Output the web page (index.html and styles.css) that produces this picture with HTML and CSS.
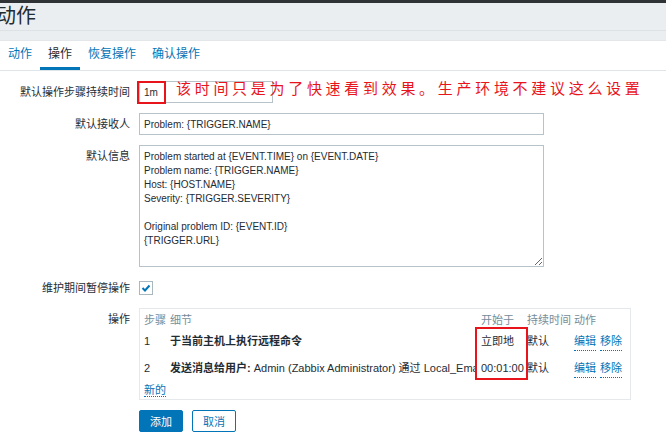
FILE: index.html
```html
<!DOCTYPE html>
<html lang="zh-CN">

<head>
  <meta charset="UTF-8">
  <meta name="viewport" content="width=device-width, initial-scale=1.0">
  <title>动作</title>
  <link rel="stylesheet" href="styles.css">
</head>

<body>
  <div class="topbar"></div>
  <div class="header">
    <h1>动作</h1>
  </div>
  <div class="header-gap"></div>

  <ul class="tabs">
    <li>动作</li>
    <li class="active">操作</li>
    <li>恢复操作</li>
    <li>确认操作</li>
  </ul>

  <form class="form">
    <label class="form-label">默认操作步骤持续时间</label>
    <div class="field field-note">
      <input class="input input-short" type="text" value="1m">
      <!-- annotation added on the screenshot -->
      <div class="mark mark-step"></div>
      <div class="note">该时间只是为了快速看到效果。生产环境不建议这么设置</div>
    </div>

    <label class="form-label">默认接收人</label>
    <div class="field">
      <input class="input input-long" type="text" value="Problem: {TRIGGER.NAME}">
    </div>

    <label class="form-label top">默认信息</label>
    <div class="field">
      <textarea class="textarea">Problem started at {EVENT.TIME} on {EVENT.DATE}
Problem name: {TRIGGER.NAME}
Host: {HOST.NAME}
Severity: {TRIGGER.SEVERITY}

Original problem ID: {EVENT.ID}
{TRIGGER.URL}</textarea>
    </div>

    <label class="form-label">维护期间暂停操作</label>
    <div class="field field-check">
      <span class="checkbox">
        <svg width="12" height="12" viewBox="0 0 12 12">
          <path d="M2.5 6 L5 8.5 L9.5 3.5" fill="none" stroke="#0275b8" stroke-width="2" />
        </svg>
      </span>
    </div>

    <label class="form-label top">操作</label>
    <div class="field">
      <div class="ops">
        <div class="ops-row ops-head">
          <div>步骤</div>
          <div>细节</div>
          <div class="col-start">开始于</div>
          <div>持续时间</div>
          <div>动作</div>
        </div>
        <div class="ops-row">
          <div>1</div>
          <div class="detail"><b>于当前主机上执行远程命令</b></div>
          <div class="col-start">立即地</div>
          <div>默认</div>
          <div class="actions"><a>编辑</a><a>移除</a></div>
        </div>
        <div class="ops-row">
          <div>2</div>
          <div class="detail"><b>发送消息给用户:</b> Admin (Zabbix Administrator) 通过 Local_Email</div>
          <div class="col-start">00:01:00</div>
          <div>默认</div>
          <div class="actions"><a>编辑</a><a>移除</a></div>
        </div>
        <div class="ops-new"><a>新的</a></div>
        <!-- annotation added on the screenshot -->
        <div class="mark mark-start"></div>
      </div>
    </div>

    <div></div>
    <div class="buttons">
      <button type="button" class="btn btn-main">添加</button>
      <button type="button" class="btn btn-alt">取消</button>
    </div>
  </form>
</body>

</html>
```

FILE: styles.css
```css
body {
  margin: 0;
  background-color: #fff;
  color: #1f2c33;
  font-family: "Liberation Sans", "Noto Sans CJK SC", sans-serif;
  font-size: 11px;
}

.topbar {
  height: 3px;
  background-color: #2f3336;
}

.header {
  height: 27px;
  background-color: #ebeef0;
  border-bottom: 1px solid #dde2e5;
}

.header h1 {
  margin: 0 0 0 -4px;
  font-size: 20px;
  font-weight: normal;
  line-height: 26px;
}

.header-gap {
  height: 9px;
  background-color: #ebeef0;
  border-bottom: 1px solid #e3e7ea;
}

.tabs {
  margin: 0;
  padding: 0;
  list-style: none;
  display: flex;
  border-bottom: 1px solid #dfe4e7;
}

.tabs li {
  padding: 0 8px;
  line-height: 26px;
  font-size: 12px;
  color: #0275b8;
  border-bottom: 3px solid transparent;
  cursor: pointer;
}

.tabs .active {
  color: #1f2c33;
  border-bottom-color: #0275b8;
}

.form {
  display: grid;
  grid-template-columns: 130px 1fr;
  grid-template-rows: 22px 22px 122px 21px 92px 22px;
  column-gap: 9px;
  row-gap: 10px;
  padding-top: 10px;
}

.form-label {
  text-align: right;
  line-height: 22px;
  white-space: nowrap;
}

.form-label.top {
  align-self: start;
}

.field {
  position: relative;
}

.input,
.textarea {
  box-sizing: border-box;
  margin: 0;
  border: 1px solid #b7c3c9;
  padding: 0 4px;
  color: #1f2c33;
  font-family: "Liberation Sans", "Noto Sans CJK SC", sans-serif;
  font-size: 10px;
  outline: none;
}

.input {
  height: 22px;
}

.input-short {
  width: 134px;
}

.input-long {
  width: 405px;
}

.textarea {
  display: block;
  width: 405px;
  height: 122px;
  padding: 4px;
  line-height: 14px;
}

.field-check {
  display: flex;
  align-items: center;
}

.checkbox {
  box-sizing: border-box;
  display: flex;
  align-items: center;
  justify-content: center;
  width: 14px;
  height: 14px;
  border: 1px solid #a9b8bf;
}

.ops {
  position: relative;
  box-sizing: border-box;
  width: 492px;
  height: 92px;
  padding: 3px 4px 4px;
  border: 1px solid #e6e9eb;
}

.ops-row {
  display: grid;
  grid-template-columns: 26px 307px 50px 47px 1fr;
  padding: 4px 0 5px;
  line-height: 17px;
  white-space: nowrap;
}

.ops-row .col-start {
  padding-left: 4px;
}

.ops-head {
  padding: 0;
  color: #768d99;
}

.detail {
  overflow: hidden;
}

.actions {
  display: flex;
  gap: 4px;
}

.ops a {
  color: #0275b8;
  border-bottom: 1px dotted #0275b8;
  cursor: pointer;
}

.ops-new {
  line-height: 14px;
}

/* red boxes and text drawn over the screenshot */
.mark {
  position: absolute;
  box-sizing: border-box;
  border: 2px solid #e8141c;
}

.mark-step {
  left: -2px;
  top: 0;
  width: 29px;
  height: 23px;
}

.mark-start {
  left: 335px;
  top: 18px;
  width: 53px;
  height: 53px;
}

.note {
  position: absolute;
  left: 37px;
  top: -1px;
  color: #e8141c;
  font-family: "Noto Sans CJK SC", sans-serif;
  font-size: 15px;
  line-height: 16px;
  letter-spacing: 3.7px;
  white-space: nowrap;
}

.buttons {
  display: flex;
  gap: 9px;
}

.btn {
  height: 22px;
  padding: 0 10px;
  border-radius: 2px;
  font-family: "Liberation Sans", "Noto Sans CJK SC", sans-serif;
  font-size: 11px;
  cursor: pointer;
}

.btn-main {
  border: 1px solid #0275b8;
  background-color: #0275b8;
  color: #fff;
}

.btn-alt {
  border: 1px solid #0275b8;
  background-color: #fff;
  color: #0275b8;
}
```
